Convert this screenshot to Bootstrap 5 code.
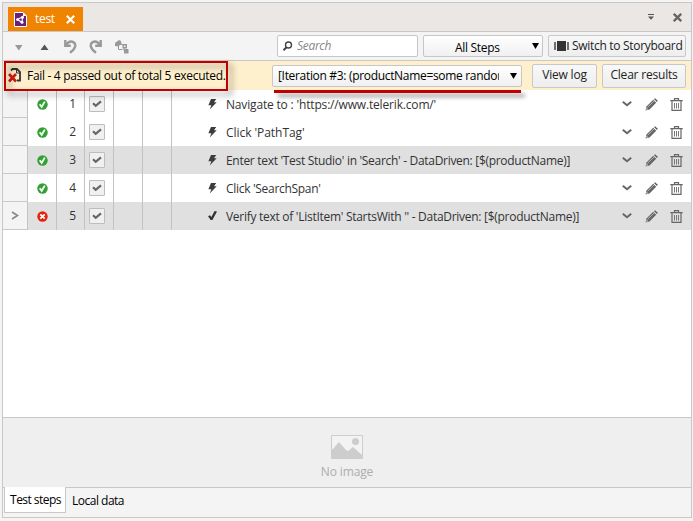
<!DOCTYPE html>
<html lang="en">
<head>
<meta charset="utf-8">
<title>test</title>
<link href="https://cdn.jsdelivr.net/npm/bootstrap@5.3.0/dist/css/bootstrap.min.css" rel="stylesheet">
<style>
body{width:693px;height:521px;overflow:hidden;background:#f4f4f4;font:12px/16px "Open Sans","Noto Sans",sans-serif;color:#333;letter-spacing:-.3px}
svg{display:block;flex:none}
.app{width:690px;height:516px;margin:2px 0 0 2px;border:1px solid #c8c8c8}
.titles{height:29px;background:#ebe7e4;border-bottom:1px solid #c8c8c8;padding-left:5px}
.title-actions{padding-right:9px;gap:19px}
.doc-tab{width:75px;height:24px;background:#f08400;color:#fff;padding-left:6px}
.tools{height:29px;background:#f4f4f4;border-bottom:1px solid #c8c8c8}
.result{height:29px;background:#fff0cd;color:#000}
.box{height:22px;border:1px solid #c6c6c6;border-radius:2px;background:#fff;color:#000;white-space:nowrap;overflow:hidden}
.grad{background:linear-gradient(#fff,#f0f0f0)}
.tbtn{height:24px;border:1px solid #c8c8c8;border-radius:2px;background:linear-gradient(#f8f8f8,#eee);color:#222;font:12px/20px "Open Sans","Noto Sans",sans-serif;letter-spacing:-.2px;padding:0 0 1px;white-space:nowrap}
.search{width:141px;margin-left:134px;color:#888;font-style:italic}
.filter{width:120px;margin-left:5px;padding:0 3px 0 31px}
.story{width:138px;height:22px;margin-left:5px;padding-left:5px;gap:3px;letter-spacing:-.3px}
.iter{width:250px;padding:0 4px 0 5px}
.iter-text{width:221px;letter-spacing:-.32px}
.result-icon{margin-left:5px}
.fail-text{margin-left:6px;letter-spacing:-.31px}
.steps{height:328px;background:#fff;border-bottom:1px solid #c8c8c8}
.step{height:28px}
.step.sel{background:#e0e0e0}
.step>svg{margin-left:14px}
.step>svg:last-child{margin-left:12px;margin-right:8px}
.step>svg:nth-last-child(3){margin-right:-1px}
.cell{height:28px;border-right:1px solid #c3c3c3}
.gutter{width:25px;background:#f4f4f4;border-bottom:1px solid #c8c8c8}
.c29{width:29px}.c28{width:28px}
.tick-cell{padding-right:4px}
.tick{width:16px;height:16px;border:1px solid #bdbdbd;border-radius:1px;background:#f0f0f0}
.act{padding-left:36px;flex:1;gap:9px}
.act span{padding-top:2px}
.step:first-child .act{letter-spacing:-.17px}
.step:nth-child(2) .act{letter-spacing:-.05px}
.step:nth-child(5) .act{letter-spacing:-.28px}
.preview{height:70px;background:#efefef;border-bottom:1px solid #c8c8c8;color:#adadad}
.preview svg{margin-top:17px}
.preview span{margin-top:5px;letter-spacing:-.12px}
.foot{background:#f4f4f4;color:#000}
.foot-tab{width:62px;height:26px;margin:-1px 0 0 1px;background:#fff;border:1px solid #c8c8c8;border-top:0;padding-left:1px;letter-spacing:-.55px}
.foot-tab,.foot-plain{padding-top:1px}
.foot-plain{height:25px;margin-left:6px;letter-spacing:-.5px}
.mark-box{position:absolute;left:4px;top:61px;width:224px;height:30px;border:2px solid #c00000;filter:drop-shadow(4px 4px 3px rgba(0,0,0,.45))}
.mark-line{position:absolute;left:274px;top:90px;width:247px;height:3px;background:#c00000;filter:drop-shadow(4px 4px 2px rgba(0,0,0,.4))}
</style>
<script src="https://cdn.jsdelivr.net/npm/bootstrap@5.3.0/dist/js/bootstrap.bundle.min.js"></script>
</head>
<body>
<svg width="0" height="0" class="position-absolute">
<symbol id="ok" viewBox="0 0 11 11"><circle cx="5.5" cy="5.5" r="5.2" fill="#32a032"/><path d="M2.700 5.200l2 2.600L7.800 2.600" fill="none" stroke="#fff" stroke-width="1.800"/></symbol>
<symbol id="bad" viewBox="0 0 11 11"><circle cx="5.5" cy="5.5" r="5.2" fill="#e5200c"/><path d="M3.300 3.300l4.400 4.400M7.700 3.300L3.300 7.700" stroke="#fff" stroke-width="1.800"/></symbol>
<symbol id="chk" viewBox="0 0 10 8"><path d="M1 3.300l2.700 2.500L9 1.300" fill="none" stroke="#666" stroke-width="2.200"/></symbol>
<symbol id="bolt" viewBox="0 0 9 11"><path d="M3 0h5.200L6 3.200h2.700L1.700 10.500 3.400 6.200H.4z" fill="#3c3c3c"/></symbol>
<symbol id="vfy" viewBox="0 0 9 10"><path d="M0 5.300L2 4.200l1.400 1.900L6.600 0 9 .4 4.400 9H2.700z" fill="#333"/></symbol>
<symbol id="down" viewBox="0 0 10 6"><path d="M.8 .8L5 4.300 9.200.8" fill="none" stroke="#666" stroke-width="2"/></symbol>
<symbol id="pen" viewBox="0 0 13 13"><path d="M.5 12.500l1-4L8.200 1.800l3 3L4.500 11.500z" fill="#666"/><path d="M9 1L10 .2l2.800 2.600L11.900 3.900z" fill="#555"/><path d="M2.600 9.300L9 3" stroke="#bbb" stroke-width=".9"/><path d="M1.200 11.800l.5-2 1.500 1.500z" fill="#ddd"/></symbol>
<symbol id="bin" viewBox="0 0 13 13"><path d="M4.500 2V.6h4V2M.3 2.600h12.400M2 3v9.400h9V3" fill="none" stroke="#666" stroke-width="1.200"/><path d="M4.500 5v5.500M6.500 5v5.500M8.500 5v5.500" stroke="#777"/></symbol>
<symbol id="undo" viewBox="0 0 13 14"><path d="M1.300 0v5.800h5.500M1.800 5.200C4 2 7 .8 9.300 2.100c3.200 1.900 2.800 6.200-3.300 10.600" fill="none" stroke="#999" stroke-width="2.400"/></symbol>
</svg>
<div class="app d-flex flex-column">
  <header class="titles d-flex align-items-end">
    <div class="doc-tab d-flex align-items-center">
      <svg width="13" height="15" viewBox="0 0 13 15"><path d="M.5.5h8.500l3.500 3.500v10.500H.5z" fill="#68217a" stroke="#fff"/><path d="M9 .5V4h3.500" fill="#fff"/><path d="M3.500 7.500L8.500 4.800 8 10.500z" fill="none" stroke="#fff" stroke-width="1.200"/><circle cx="3.600" cy="7.500" r="1.500" fill="#fff"/><circle cx="8.500" cy="5.200" r="1.500" fill="#fff"/><circle cx="8" cy="10.300" r="1.500" fill="#fff"/></svg>
      <span class="ms-2">test</span>
      <svg class="ms-auto me-2" width="9" height="9" viewBox="0 0 9 9"><path d="M.8.8l7.400 7.400M8.200.8L.8 8.200" stroke="#fff" stroke-width="2.200"/></svg>
    </div>
    <div class="title-actions ms-auto d-flex align-items-center align-self-center">
      <svg width="6" height="6" viewBox="0 0 6 6"><path d="M0 .5h6" stroke="#555"/><path d="M0 2.500h6L3 5.800z" fill="#555"/></svg>
      <svg width="9" height="9" viewBox="0 0 9 9"><path d="M.8.8l7.400 7.400M8.200.8L.8 8.200" stroke="#666" stroke-width="2.300"/></svg>
    </div>
  </header>
  <div class="tools d-flex align-items-center">
    <svg width="140" height="28" viewBox="3 32 140 28"><path d="M15 45h7.500l-3.700 5.500z" fill="#999"/><path d="M40.500 50h8l-4-5.500z" fill="#555"/>
      <use href="#undo" x="64" y="40" width="13" height="14"/><g transform="translate(102 40) scale(-1 1)"><use href="#undo" width="13" height="14"/></g>
      <g fill="#999"><path d="M115 43l4-3 2 1 .5 3-3.500 2.500-3-.5z"/><path d="M118.500 44v5.500h4M120 44.500h4v6" fill="none" stroke="#999"/><path d="M122.500 44h4.500v4.500h-4.500zM124 49h4.500v4.500H124z"/><path d="M124 45.500h1.500V47H124z" fill="#f4f4f4"/></g></svg>
    <div class="box search d-flex align-items-center"><svg class="mx-1" width="11" height="11" viewBox="0 0 11 11"><circle cx="6.500" cy="4" r="3" fill="none" stroke="#444" stroke-width="1.400"/><path d="M4.500 6.200L1.500 9.300" stroke="#444" stroke-width="2"/></svg>Search</div>
    <div class="box grad filter d-flex align-items-center"><span class="pt-1">All Steps</span><svg class="ms-auto" width="7" height="6"><path d="M0 0h7L3.500 6z"/></svg></div>
    <button class="tbtn story d-flex align-items-center"><svg width="15" height="10" viewBox="0 0 15 10"><path d="M3 0h9v10H3z" fill="#333"/><path d="M1 1v8M14 1v8" stroke="#444" stroke-width="1.500"/></svg><span>Switch to Storyboard</span></button>
  </div>
  <div class="result d-flex align-items-center">
    <svg class="result-icon" width="13" height="15" viewBox="0 0 13 15"><path d="M3 2.500L4.500 1H9l3 3v8.500H9" fill="none" stroke="#333" stroke-width="1.800"/><path d="M8.500 1v4H12" fill="none" stroke="#333"/><path d="M1 6l7 7.500M8 6L1 13.500" stroke="#d01c10" stroke-width="2.600"/></svg>
    <span class="fail-text text-nowrap">Fail - 4 passed out of total 5 executed.</span>
    <div class="box grad iter d-flex align-items-center ms-auto"><span class="iter-text overflow-hidden">[Iteration #3: (productName=some random)]</span><svg class="ms-auto" width="7" height="6"><path d="M0 0h7L3.500 6z"/></svg></div>
    <button class="tbtn" style="width:65px;margin-left:10px">View log</button>
    <button class="tbtn" style="width:84px;margin:0 5px">Clear results</button>
  </div>
  <main class="steps" id="steps"></main>
  <div class="preview d-flex flex-column align-items-center">
    <svg width="32" height="24" viewBox="0 0 32 24"><path d="M.5.5h31v23H.5z" fill="#f3f3f3" stroke="#cdcdcd"/><path d="M1 15l7-8 7 8 2 1 5-4 9 8v3H1z" fill="#cdcdcd"/><circle cx="24.500" cy="6.500" r="3.500" fill="#cdcdcd"/></svg>
    <span>No image</span>
  </div>
  <footer class="foot d-flex">
    <div class="foot-tab d-flex align-items-center justify-content-center">Test steps</div>
    <div class="foot-plain d-flex align-items-center">Local data</div>
  </footer>
</div>
<div class="mark-box"></div><div class="mark-line"></div>
<script>
const steps=["Navigate to : 'https://www.telerik.com/'","Click 'PathTag'","Enter text 'Test Studio' in 'Search' - DataDriven: [$(productName)]","Click 'SearchSpan'","Verify text of 'ListItem' StartsWith '' - DataDriven: [$(productName)]"];
const icon=(n,w,h)=>`<svg width="${w}" height="${h}"><use href="#${n}"/></svg>`;
const mid='d-flex align-items-center justify-content-center';
document.getElementById('steps').innerHTML=steps.map((t,i)=>`<div class="step d-flex align-items-center ${i==2||i==4?'sel':''}">
<div class="cell gutter ${mid}">${i==4?'<svg width="8" height="9"><path d="M1 1l5.500 3.500L1 8" fill="none" stroke="#888" stroke-width="1.600"/></svg>':''}</div>
<div class="cell c29 ${mid}">${icon(i==4?'bad':'ok',11,11)}</div>
<div class="cell c28 ${mid} ps-1">${i+1}</div>
<div class="cell c29 tick-cell ${mid}"><span class="tick ${mid}">${icon('chk',10,8)}</span></div>
<div class="cell c29"></div><div class="cell c29"></div>
<div class="act d-flex align-items-center text-nowrap">${i==4?icon('vfy',9,10):icon('bolt',9,11)}<span>${t}</span></div>
${icon('down',10,6)}${icon('pen',13,13)}${icon('bin',13,13)}</div>`).join('');
</script>
</body>
</html>
